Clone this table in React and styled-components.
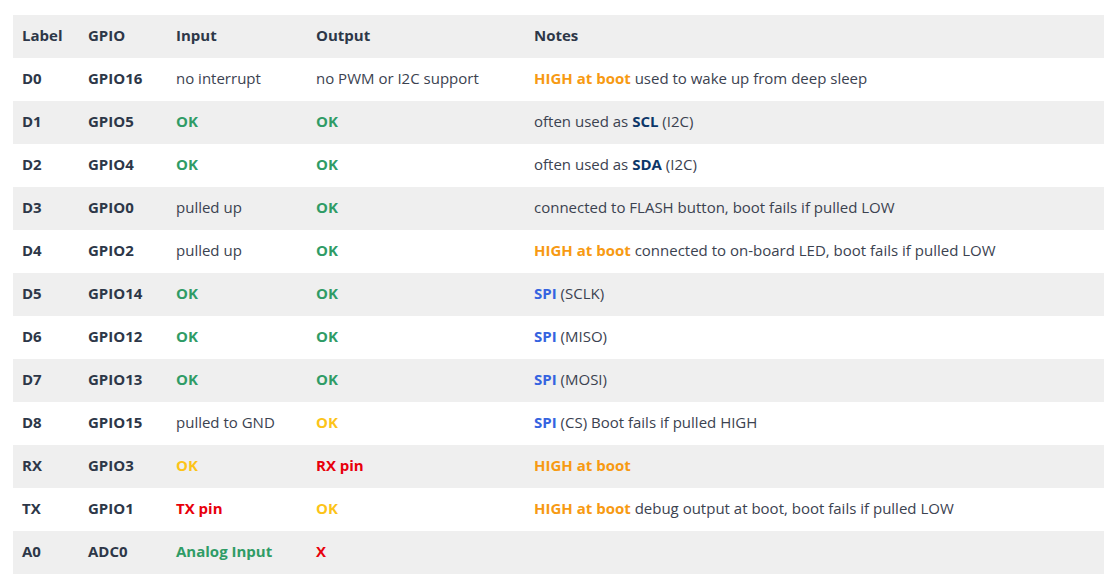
import React from 'react';
import styled, { createGlobalStyle } from 'styled-components';

const GlobalStyle = createGlobalStyle`
  body {
    margin: 0;
    padding: 15px 12px 0 13px;
    background: #ffffff;
    font-family: "Open Sans", "Noto Sans", sans-serif;
    color: #374151;
  }
`;

const Table = styled.table`
  width: 1091px;
  border-collapse: collapse;
  font-size: 15px;
`;

const Row = styled.tr`
  height: 43px;
  background: ${(p) => (p.$shaded ? '#efefef' : '#ffffff')};
`;

const HeadCell = styled.th`
  text-align: left;
  font-weight: 700;
  color: #2d3748;
  padding: 0 9px 3px;
  width: ${(p) => p.$w || 'auto'};
`;

const Cell = styled.td`
  padding: 0 9px 3px;
  color: #3b4250;
  font-weight: ${(p) => (p.$bold ? 700 : 400)};
  ${(p) => p.$bold && 'color: #2d3748;'}
  white-space: nowrap;
`;

const Mark = styled.span`
  font-weight: 700;
  color: ${(p) =>
    ({
      green: '#2f9c66',
      yellow: '#fcc419',
      orange: '#f79a12',
      red: '#e8000b',
      blue: '#3563e0',
      navy: '#0c3769',
    })[p.$tone]};
`;

const high = <Mark $tone="orange">HIGH at boot</Mark>;
const spi = <Mark $tone="blue">SPI</Mark>;
const ok = (tone = 'green') => <Mark $tone={tone}>OK</Mark>;

const rows = [
  ['D0', 'GPIO16', 'no interrupt', 'no PWM or I2C support', <>{high} used to wake up from deep sleep</>],
  ['D1', 'GPIO5', ok(), ok(), <>often used as <Mark $tone="navy">SCL</Mark> (I2C)</>],
  ['D2', 'GPIO4', ok(), ok(), <>often used as <Mark $tone="navy">SDA</Mark> (I2C)</>],
  ['D3', 'GPIO0', 'pulled up', ok(), 'connected to FLASH button, boot fails if pulled LOW'],
  ['D4', 'GPIO2', 'pulled up', ok(), <>{high} connected to on-board LED, boot fails if pulled LOW</>],
  ['D5', 'GPIO14', ok(), ok(), <>{spi} (SCLK)</>],
  ['D6', 'GPIO12', ok(), ok(), <>{spi} (MISO)</>],
  ['D7', 'GPIO13', ok(), ok(), <>{spi} (MOSI)</>],
  ['D8', 'GPIO15', 'pulled to GND', ok('yellow'), <>{spi} (CS) Boot fails if pulled HIGH</>],
  ['RX', 'GPIO3', ok('yellow'), <Mark $tone="red">RX pin</Mark>, high],
  ['TX', 'GPIO1', <Mark $tone="red">TX pin</Mark>, ok('yellow'), <>{high} debug output at boot, boot fails if pulled LOW</>],
  ['A0', 'ADC0', <Mark $tone="green">Analog Input</Mark>, <Mark $tone="red">X</Mark>, ''],
];

export default function App() {
  return (
    <>
      <GlobalStyle />
      <Table>
        <thead>
          <Row $shaded>
            <HeadCell $w="48px">Label</HeadCell>
            <HeadCell $w="70px">GPIO</HeadCell>
            <HeadCell $w="122px">Input</HeadCell>
            <HeadCell $w="200px">Output</HeadCell>
            <HeadCell>Notes</HeadCell>
          </Row>
        </thead>
        <tbody>
          {rows.map(([label, gpio, input, output, notes], i) => (
            <Row key={label} $shaded={i % 2 === 1}>
              <Cell $bold>{label}</Cell>
              <Cell $bold>{gpio}</Cell>
              <Cell>{input}</Cell>
              <Cell>{output}</Cell>
              <Cell>{notes}</Cell>
            </Row>
          ))}
        </tbody>
      </Table>
    </>
  );
}
